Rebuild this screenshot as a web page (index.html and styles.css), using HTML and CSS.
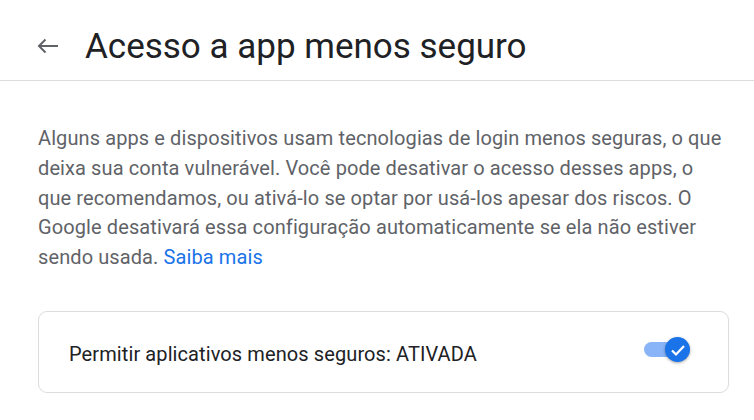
FILE: index.html
```html
<!DOCTYPE html>
<html lang="pt-BR">
<head>
<meta charset="utf-8">
<link rel="stylesheet" href="styles.css">
</head>
<body>
<header class="topbar">
  <svg class="back" width="22" height="16" viewBox="0 0 22 16" aria-hidden="true">
    <path d="M21 8H2M8.5 1.5L2 8l6.5 6.5" fill="none" stroke="#5f6368" stroke-width="2"/>
  </svg>
  <h1 class="title">Acesso a app menos seguro</h1>
</header>
<main class="content">
  <p class="intro">Alguns apps e dispositivos usam tecnologias de login menos seguras, o que deixa sua conta vulnerável. Você pode desativar o acesso desses apps, o que recomendamos, ou ativá-lo se optar por usá-los apesar dos riscos. O Google desativará essa configuração automaticamente se ela não estiver sendo usada. <a class="link" href="#">Saiba mais</a></p>
  <section class="card">
    <span class="card-label">Permitir aplicativos menos seguros: ATIVADA</span>
    <span class="toggle">
      <span class="track"></span>
      <span class="thumb">
        <svg width="18" height="18" viewBox="0 0 18 18" aria-hidden="true"><path d="M3 9.5l4 4 8-8.5" fill="none" stroke="#fff" stroke-width="2.2"/></svg>
      </span>
    </span>
  </section>
</main>
</body>
</html>
```
FILE: styles.css
```css
html, body {
  margin: 0;
  padding: 0;
  background: #fff;
}
body {
  font-family: Roboto, "Noto Sans", Arial, sans-serif;
}
.topbar {
  height: 80px;
  border-bottom: 1px solid #dadce0;
  display: flex;
  align-items: center;
  padding-left: 37px;
  box-sizing: content-box;
}
.back {
  flex: none;
  margin-right: 26px;
  margin-top: 12px;
}
.title {
  margin: 12px 0 0;
  font-weight: 400;
  font-size: 35px;
  color: #202124;
  letter-spacing: 0;
}
.content {
  padding: 0 25px 0 38px;
}
.intro {
  margin: 43px 0 0;
  font-size: 20px;
  letter-spacing: 0.1px;
  line-height: 29.75px;
  color: #5f6368;
}
.link {
  color: #1a73e8;
  text-decoration: none;
}
.card {
  margin-top: 38px;
  height: 80px;
  border: 1px solid #dadce0;
  border-radius: 9px;
  display: flex;
  align-items: center;
  justify-content: space-between;
  padding: 0 38px 0 30px;
}
.card-label {
  font-size: 20px;
  letter-spacing: 0.1px;
  color: #202124;
  margin-top: 4px;
}
.toggle {
  position: relative;
  width: 46px;
  height: 25px;
  margin-top: -4px;
}
.track {
  position: absolute;
  left: 0;
  top: 5px;
  width: 36px;
  height: 15px;
  border-radius: 8px;
  background: #8ab4f8;
}
.thumb {
  position: absolute;
  right: 0;
  top: 0;
  width: 25px;
  height: 25px;
  border-radius: 50%;
  background: #1a73e8;
  box-shadow: 0 1px 3px rgba(0,0,0,0.35);
  display: flex;
  align-items: center;
  justify-content: center;
}
```
